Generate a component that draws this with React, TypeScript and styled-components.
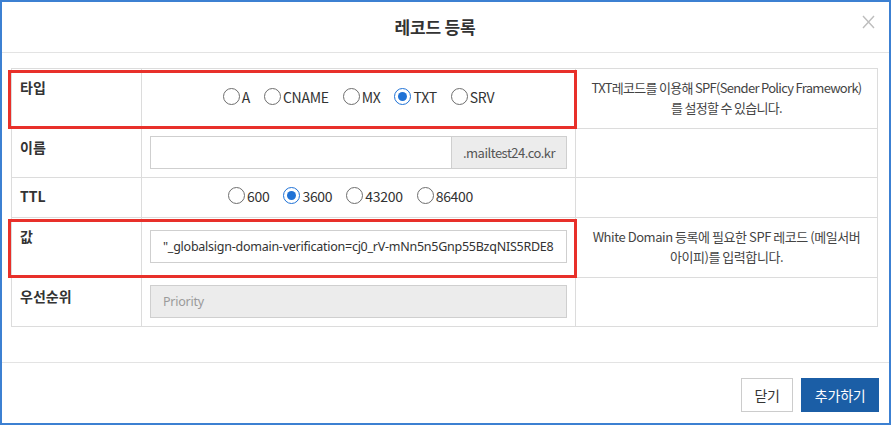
import React from "react";
import styled, { createGlobalStyle } from "styled-components";

const GlobalStyle = createGlobalStyle`
  html, body { margin: 0; padding: 0; background: #ffffff; }
  body { font-family: "Noto Sans CJK KR", "Noto Sans", sans-serif; color: #333; }
  * { box-sizing: border-box; }
`;

const Frame = styled.div`
  width: 891px;
  height: 425px;
  border: 2px solid #3c80d2;
  display: flex;
  flex-direction: column;
  background: #fff;
`;

const Header = styled.div`
  height: 51px;
  flex: none;
  display: flex;
  align-items: center;
  border-bottom: 1px solid #e3e3e3;
`;

const Title = styled.h1`
  flex: 1;
  margin: 0;
  padding-left: 6px;
  padding-bottom: 2px;
  text-align: center;
  font-size: 17px;
  font-weight: 700;
  color: #333;
  letter-spacing: -0.2px;
`;

const CloseButton = styled.button`
  width: 13px;
  height: 14px;
  margin: 0 14px 11px 0;
  padding: 0;
  border: 0;
  background: none;
  display: flex;
`;

const Body = styled.div`
  flex: 1;
  padding: 15px 11px 0 9px;
`;

const Table = styled.div`
  position: relative;
  display: grid;
  grid-template-columns: 130px 434px 1fr;
  grid-template-rows: 60px 49px 40px 60px 49px;
  border-top: 1px solid #dcdcdc;
  border-left: 1px solid #dcdcdc;
`;

const Cell = styled.div`
  border-right: 1px solid #dcdcdc;
  border-bottom: 1px solid #dcdcdc;
  min-width: 0;
`;

const LabelCell = styled(Cell)`
  padding: 8px 8px 0;
  font-size: 14px;
  font-weight: 700;
  line-height: 20px;
  color: #333;
`;

const FieldCell = styled(Cell)`
  display: flex;
  align-items: center;
  padding: 0 8px 2px 8px;
`;

const RadioCell = styled(Cell)<{ $shift?: number }>`
  display: flex;
  align-items: center;
  justify-content: center;
  gap: 14px;
  padding-bottom: 4px;
  padding-right: ${(p) => p.$shift ?? 0}px;
`;

const DescCell = styled(Cell)<{ $tight?: boolean }>`
  display: flex;
  flex-direction: column;
  align-items: center;
  justify-content: center;
  text-align: center;
  padding: 0 2px 1px;
  font-size: 13px;
  line-height: 20px;
  color: #444;
  letter-spacing: ${(p) => (p.$tight ? "-0.7px" : "-0.45px")};
  white-space: nowrap;
`;

const Highlight = styled.div<{ $row: number }>`
  position: absolute;
  grid-column: 1 / 3;
  grid-row: ${(p) => `${p.$row} / ${p.$row + 1}`};
  top: 1px;
  bottom: 0;
  left: -4px;
  right: -1px;
  border: 3px solid #e8302a;
  pointer-events: none;
`;

const RadioItem = styled.label`
  display: inline-flex;
  align-items: center;
  gap: 2px;
  font-size: 14px;
  color: #333;
  letter-spacing: -0.3px;
`;

const RadioCircle = styled.span<{ $checked?: boolean }>`
  width: 17px;
  height: 17px;
  border-radius: 50%;
  border: ${(p) => (p.$checked ? "1.5px solid #1f72d6" : "1px solid #6e6e6e")};
  background: #fff;
  display: flex;
  align-items: center;
  justify-content: center;
  flex: none;
  &::after {
    content: "";
    width: 9px;
    height: 9px;
    border-radius: 50%;
    background: ${(p) => (p.$checked ? "#1f72d6" : "transparent")};
  }
`;

const InputGroup = styled.div`
  display: flex;
  width: 100%;
  height: 33px;
`;

const TextInput = styled.div<{ $disabled?: boolean }>`
  flex: 1;
  height: 33px;
  border: 1px solid #cfcfcf;
  background: ${(p) => (p.$disabled ? "#ececec" : "#fff")};
  display: flex;
  align-items: center;
  padding: 0 12px;
  font-family: "Noto Sans", sans-serif;
  font-size: 12.5px;
  letter-spacing: -0.25px;
  color: #333;
  white-space: nowrap;
  overflow: hidden;
`;

const Placeholder = styled.span`
  color: #9a9a9a;
`;

const Addon = styled.div`
  width: 115px;
  flex: none;
  border: 1px solid #cfcfcf;
  border-left: 0;
  background: #ececec;
  display: flex;
  align-items: center;
  justify-content: center;
  font-size: 13px;
  color: #555;
  letter-spacing: -0.5px;
`;

const Footer = styled.div`
  height: 61px;
  flex: none;
  border-top: 1px solid #e3e3e3;
  display: flex;
  justify-content: flex-end;
  align-items: flex-start;
  gap: 8px;
  padding: 15px 10px 0 0;
`;

const Button = styled.button<{ $primary?: boolean }>`
  height: 34px;
  padding: 0 12.5px;
  border: 1px solid ${(p) => (p.$primary ? "#1b5ea6" : "#cccccc")};
  background: ${(p) => (p.$primary ? "#1b5ea6" : "#ffffff")};
  color: ${(p) => (p.$primary ? "#ffffff" : "#333333")};
  font-family: "Noto Sans CJK KR", sans-serif;
  font-size: 14px;
  letter-spacing: -0.2px;
`;

const Radio = ({ label, checked }: { label: string; checked?: boolean }) => (
  <RadioItem>
    <RadioCircle $checked={checked} />
    {label}
  </RadioItem>
);

export default function App() {
  return (
    <>
      <GlobalStyle />
      <Frame>
        <Header>
          <Title>레코드 등록</Title>
          <CloseButton aria-label="close">
            <svg width="13" height="14" viewBox="0 0 13 14">
              <path d="M1 1 L12 13 M12 1 L1 13" stroke="#bdbdbd" strokeWidth="1.4" fill="none" />
            </svg>
          </CloseButton>
        </Header>
        <Body>
          <Table>
            <LabelCell>타입</LabelCell>
            <RadioCell>
              <Radio label="A" />
              <Radio label="CNAME" />
              <Radio label="MX" />
              <Radio label="TXT" checked />
              <Radio label="SRV" />
            </RadioCell>
            <DescCell $tight>
              <span>TXT레코드를 이용해 SPF(Sender Policy Framework)</span>
              <span>를 설정할 수 있습니다.</span>
            </DescCell>

            <LabelCell>이름</LabelCell>
            <FieldCell>
              <InputGroup>
                <TextInput />
                <Addon>.mailtest24.co.kr</Addon>
              </InputGroup>
            </FieldCell>
            <DescCell />

            <LabelCell>TTL</LabelCell>
            <RadioCell $shift={16}>
              <Radio label="600" />
              <Radio label="3600" checked />
              <Radio label="43200" />
              <Radio label="86400" />
            </RadioCell>
            <DescCell />

            <LabelCell>값</LabelCell>
            <FieldCell>
              <TextInput>"_globalsign-domain-verification=cj0_rV-mNn5n5Gnp55BzqNIS5RDE8</TextInput>
            </FieldCell>
            <DescCell>
              <span>White Domain 등록에 필요한 SPF 레코드 (메일서버</span>
              <span>아이피)를 입력합니다.</span>
            </DescCell>

            <LabelCell>우선순위</LabelCell>
            <FieldCell>
              <TextInput $disabled>
                <Placeholder>Priority</Placeholder>
              </TextInput>
            </FieldCell>
            <DescCell />

            <Highlight $row={1} />
            <Highlight $row={4} />
          </Table>
        </Body>
        <Footer>
          <Button>닫기</Button>
          <Button $primary>추가하기</Button>
        </Footer>
      </Frame>
    </>
  );
}
